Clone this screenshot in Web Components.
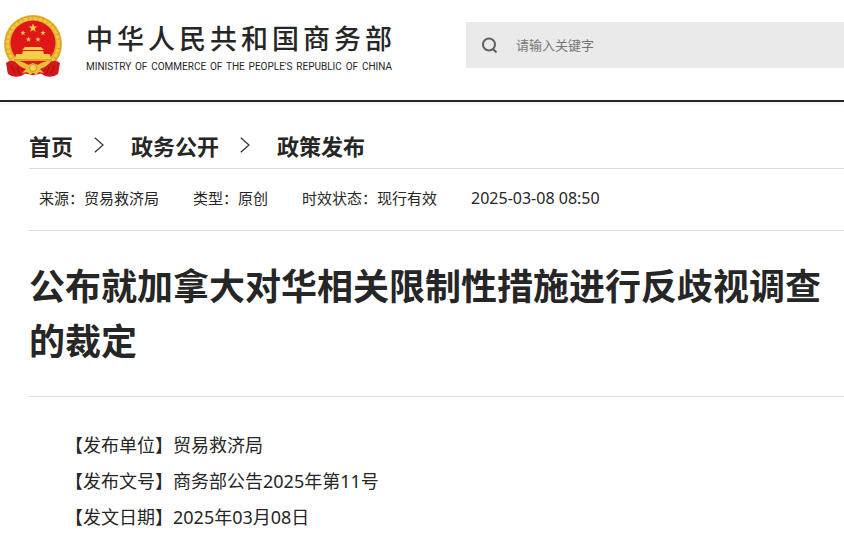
<!DOCTYPE html>
<html lang="zh-CN">
<head>
<meta charset="utf-8">
<meta name="viewport" content="width=device-width, initial-scale=1">
<title>公布就加拿大对华相关限制性措施进行反歧视调查的裁定</title>
<style>
body { margin: 0; background: #fff; color: #262626; font-family: "Noto Sans", "Noto Sans CJK SC", sans-serif; }
</style>
</head>
<body>
<policy-page></policy-page>
<script>
const define = (name, html, setup) => customElements.define(name, class extends HTMLElement {
  constructor() {
    super();
    const template = document.createElement('template');
    template.innerHTML = html;
    this.attachShadow({ mode: 'open' }).append(template.content.cloneNode(true));
  }
  connectedCallback() { if (setup) setup(this); }
});

define('national-emblem', `
<style>
:host { display: block; flex: none; width: 60px; height: 64px; }
svg { display: block; width: 100%; height: 100%; }
</style>
<svg viewBox="0 0 60 64" aria-hidden="true">
  <defs>
    <polygon id="star" points="0,-10 2.4,-3.2 9.5,-3.1 3.8,1.2 5.9,8.1 0,4 -5.9,8.1 -3.8,1.2 -9.5,-3.1 -2.4,-3.2"/>
  </defs>
  <path d="M4 49 L13 46 L30 54 L47 46 L56 49 L55 60 L50 57 L47 62 L41 59 L30 61 L19 59 L13 62 L10 57 L5 60Z" fill="#c9151b"/>
  <circle cx="30" cy="30" r="29" fill="#e3ae2c"/>
  <circle cx="30" cy="30" r="26.500" fill="none" stroke="#d79a25" stroke-width="3" stroke-dasharray="2 1.600"/>
  <circle cx="30" cy="30" r="25.500" fill="none" stroke="#f1c840" stroke-width="3" stroke-dasharray="4 1"/>
  <circle cx="30" cy="29" r="22.500" fill="#df1718"/>
  <g fill="#f5cf45">
    <use href="#star" transform="translate(30 14) scale(.47)"/>
    <use href="#star" transform="translate(20 19) scale(.28)"/>
    <use href="#star" transform="translate(40 19) scale(.28)"/>
    <use href="#star" transform="translate(25.500 25.500) scale(.28)"/>
    <use href="#star" transform="translate(35 25.500) scale(.28)"/>
    <path d="M22 33h16l3 3H19zM20 37h20l1 3H19zM13 40h34l1 5H12z"/>
    <path d="M11 45h38v2H11z" fill="#e3a62b"/>
  </g>
  <path d="M3 49 Q9 44 15 50 Q22 47 29 55 L18 62 Q10 64 5 60Z M57 49 Q51 44 45 50 Q38 47 31 55 L42 62 Q50 64 55 60Z" fill="#d3171b"/>
  <path d="M12 47 Q20 47 25 51 L30 49 L35 51 Q40 47 48 47 Q44 53 37 55 L41 59 L35 58 L34 61 L30 59 L26 61 L25 58 L19 59 L23 55 Q16 53 12 47Z" fill="#edbd38"/>
  <circle cx="30" cy="54" r="3.500" fill="#f7d654" stroke="#c98320" stroke-width=".8"/>
  <path d="M8 51l4 8M52 51l-4 8M14 53l3 7M46 53l-3 7" stroke="#a80d12" stroke-width="1"/>
</svg>`);

define('site-brand', `
<style>
:host { display: block; }
a { display: flex; align-items: flex-start; gap: 23px; color: inherit; text-decoration: none; }
.names { width: 306px; padding-top: 4px; }
.zh, .en { display: block; text-align: justify; text-align-last: justify; white-space: nowrap; }
.zh { font: 500 27px/40px "Noto Sans CJK SC", sans-serif; }
.en { font: 10px/18px Roboto, "Liberation Sans", sans-serif; }
</style>
<a href="#"><national-emblem></national-emblem>
  <span class="names"><span class="zh">中华人民共和国商务部</span><span class="en">MINISTRY OF COMMERCE OF THE PEOPLE'S REPUBLIC OF CHINA</span></span>
</a>`);

define('site-search', `
<style>
:host { display: block; }
form { display: flex; align-items: center; height: 46px; padding-left: 15px; gap: 18px; background: #eaeaea; }
button { display: block; flex: none; border: 0; padding: 0; background: none; width: 17px; height: 17px; }
svg { display: block; width: 17px; height: 17px; }
input { flex: 1; min-width: 0; border: 0; padding: 0; outline: 0; background: none; color: #262626; font: 13px/20px "Noto Sans CJK SC", sans-serif; }
input::placeholder { color: #757575; opacity: 1; }
</style>
<form role="search">
  <button type="button" aria-label="搜索"><svg viewBox="0 0 17 17" fill="none" stroke="#606060" stroke-width="2"><circle cx="8" cy="7.500" r="6"/><path d="M12 12 15.500 15.500"/></svg></button>
  <input type="text" aria-label="请输入关键字" placeholder="请输入关键字">
</form>`);

define('site-header', `
<style>
:host { display: flex; align-items: flex-start; gap: 74px; height: 100px; padding-left: 3px; box-sizing: content-box; border-bottom: 2px solid #262626; box-shadow: 0 2px 4px rgba(0,0,0,.06); }
site-brand { flex: none; padding-top: 14px; }
site-search { flex: 1; padding-top: 22px; }
</style>
<site-brand></site-brand><site-search></site-search>`);

define('crumb-trail', `
<style>
:host { display: block; border-bottom: 1px solid #dcdcdc; padding: 27px 0 7px; }
nav { display: flex; align-items: center; }
a { color: inherit; text-decoration: none; font: 700 22px/32px "Noto Sans CJK SC", sans-serif; white-space: nowrap; }
svg { flex: none; width: 10px; height: 16px; margin: 0 27px 0 21px; }
</style>
<nav aria-label="当前位置"></nav>`, host => {
  const nav = host.shadowRoot.querySelector('nav');
  const arrow = '<svg viewBox="0 0 10 16" fill="none" stroke="#333" stroke-width="1.200" aria-hidden="true"><path d="M.8 .8 9 8 .8 15.200"/></svg>';
  nav.innerHTML = host.getAttribute('items').split(',').map(t => '<a href="#">' + t + '</a>').join(arrow);
});

define('article-meta', `
<style>
:host { display: flex; flex-wrap: wrap; align-items: center; gap: 0 34px; padding: 17px 10px 20px; border-bottom: 1px solid #dcdcdc; font: 15px/24px "Noto Sans CJK SC", sans-serif; }
::slotted(time) { font: 16px/24px "Noto Sans", sans-serif; }
</style>
<slot></slot>`);

define('article-title', `
<style>
:host { display: block; padding: 26px 0 29px; border-bottom: 1px solid #dcdcdc; }
h1 { margin: 0; font: 700 36px/55px "Noto Sans CJK SC", sans-serif; }
</style>
<h1><slot></slot></h1>`);

define('notice-field', `
<style>
:host { display: block; font-size: 18px; line-height: 36px; padding-left: 36px; }
</style>
<span>【<slot name="label"></slot>】</span><slot></slot>`);

define('policy-page', `
<style>
:host { display: block; }
main { padding-left: 29px; }
section { padding: 30px 0 14px; }
</style>
<site-header></site-header>
<main>
  <crumb-trail items="首页,政务公开,政策发布"></crumb-trail>
  <article-meta><span>来源：贸易救济局</span><span>类型：原创</span><span>时效状态：现行有效</span><time datetime="2025-03-08T08:50">2025-03-08 08:50</time></article-meta>
  <article-title>公布就加拿大对华相关限制性措施进行反歧视调查的裁定</article-title>
  <section>
    <notice-field><span slot="label">发布单位</span>贸易救济局</notice-field>
    <notice-field><span slot="label">发布文号</span>商务部公告2025年第11号</notice-field>
    <notice-field><span slot="label">发文日期</span>2025年03月08日</notice-field>
  </section>
</main>`);
</script>
</body>
</html>
